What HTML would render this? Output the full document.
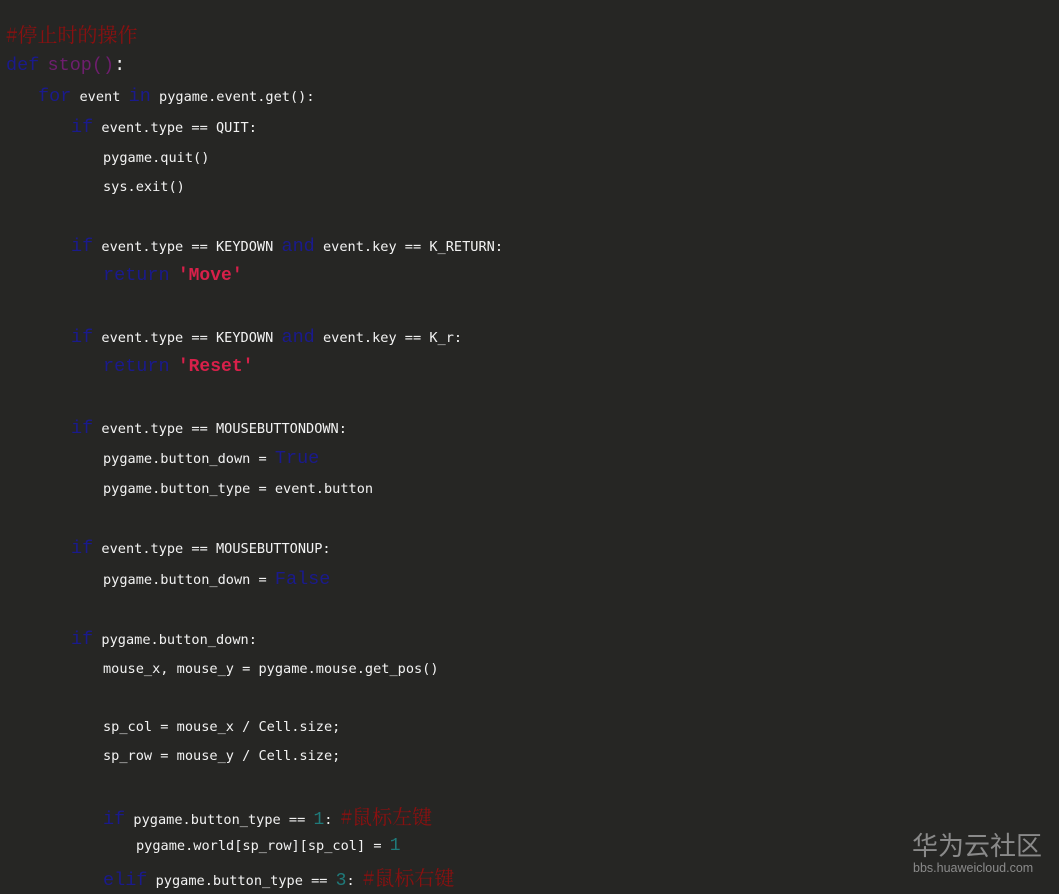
<!DOCTYPE html>
<html><head><meta charset="utf-8"><style>
html,body{margin:0;padding:0;background:#262624;width:1059px;height:894px;overflow:hidden}
.l{position:absolute;height:22px;line-height:22px;white-space:pre;font-family:"DejaVu Sans Mono","Liberation Mono",monospace;font-size:13.6px;color:#f2f2f2}
.k{font-family:"Liberation Mono",monospace;font-size:18.5px;color:#1a1a8c}
.s{font-family:"Liberation Mono",monospace;font-size:18px;color:#d8204a;font-weight:bold}
.n{font-family:"Liberation Mono",monospace;font-size:18px;color:#1f7a7a}
.c{font-family:"Noto Serif CJK SC","Liberation Serif",serif;font-size:20px;color:#8a1010}
.f{font-family:"Liberation Mono",monospace;font-size:18.5px;color:#6e1e6e}
.wm{position:absolute;left:912px;top:830px;color:#8a8a8a;font-family:"Liberation Sans","Noto Sans CJK SC",sans-serif}
</style></head><body>
<div class="l" style="left:6px;top:23px"><span class="c">#停止时的操作</span></div>
<div class="l" style="left:6px;top:55px"><span class="k">def</span> <span class="f">stop()</span><span class="k" style="color:#f2f2f2">:</span></div>
<div class="l" style="left:38px;top:86px"><span class="k">for</span> event <span class="k">in</span> pygame.event.get():</div>
<div class="l" style="left:71px;top:117px"><span class="k">if</span> event.type == QUIT:</div>
<div class="l" style="left:103px;top:147px">pygame.quit()</div>
<div class="l" style="left:103px;top:176px">sys.exit()</div>
<div class="l" style="left:71px;top:236px"><span class="k">if</span> event.type == KEYDOWN <span class="k">and</span> event.key == K_RETURN:</div>
<div class="l" style="left:103px;top:265px"><span class="k">return</span> <span class="s">'Move'</span></div>
<div class="l" style="left:71px;top:327px"><span class="k">if</span> event.type == KEYDOWN <span class="k">and</span> event.key == K_r:</div>
<div class="l" style="left:103px;top:356px"><span class="k">return</span> <span class="s">'Reset'</span></div>
<div class="l" style="left:71px;top:418px"><span class="k">if</span> event.type == MOUSEBUTTONDOWN:</div>
<div class="l" style="left:103px;top:448px">pygame.button_down = <span class="k">True</span></div>
<div class="l" style="left:103px;top:478px">pygame.button_type = event.button</div>
<div class="l" style="left:71px;top:538px"><span class="k">if</span> event.type == MOUSEBUTTONUP:</div>
<div class="l" style="left:103px;top:569px">pygame.button_down = <span class="k">False</span></div>
<div class="l" style="left:71px;top:629px"><span class="k">if</span> pygame.button_down:</div>
<div class="l" style="left:103px;top:658px">mouse_x, mouse_y = pygame.mouse.get_pos()</div>
<div class="l" style="left:103px;top:716px">sp_col = mouse_x / Cell.size;</div>
<div class="l" style="left:103px;top:745px">sp_row = mouse_y / Cell.size;</div>
<div class="l" style="left:103px;top:805px"><span class="k">if</span> pygame.button_type == <span class="n">1</span>: <span class="c">#鼠标左键</span></div>
<div class="l" style="left:136px;top:835px">pygame.world[sp_row][sp_col] = <span class="n">1</span></div>
<div class="l" style="left:103px;top:866px"><span class="k">elif</span> pygame.button_type == <span class="n">3</span>: <span class="c">#鼠标右键</span></div>
<div class="wm" style="font-size:26px;line-height:30px;top:831px">华为云社区</div>
<div class="wm" style="font-size:12.5px;line-height:14px;top:861px;left:913px">bbs.huaweicloud.com</div>
</body></html>
